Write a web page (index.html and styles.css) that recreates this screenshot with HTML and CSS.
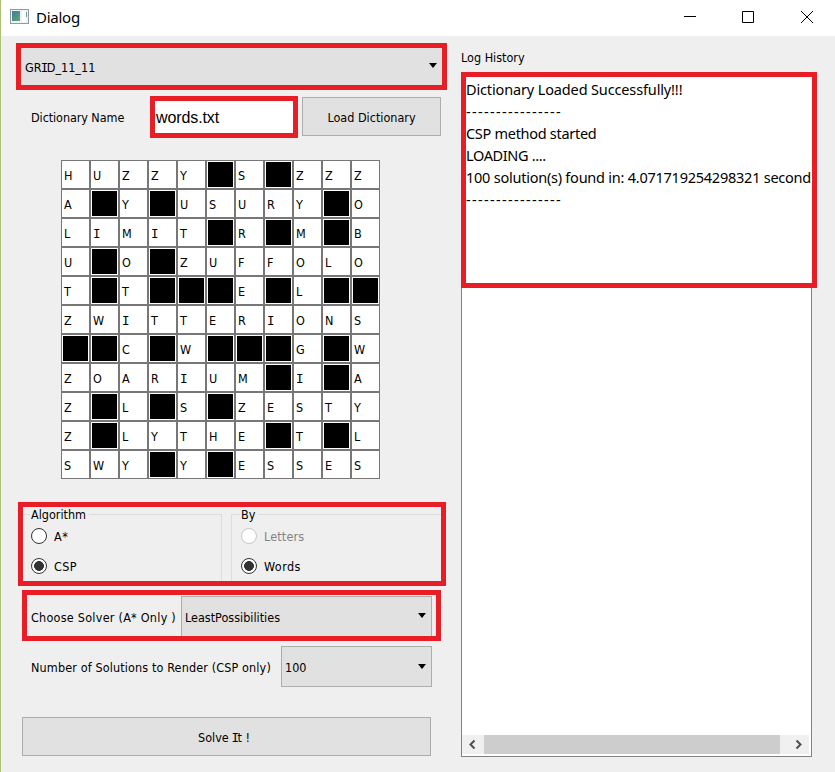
FILE: index.html
```html
<!DOCTYPE html>
<html lang="en">
<head>
<meta charset="utf-8">
<title>Dialog</title>
<link rel="stylesheet" href="styles.css">
</head>
<body>
<header class="titlebar">
  <svg class="app-icon" width="20" height="16" viewBox="0 0 20 16">
    <defs><linearGradient id="g" x1="0" y1="0" x2="1" y2="1"><stop offset="0" stop-color="#3f7d9c"/><stop offset="1" stop-color="#62a578"/></linearGradient></defs>
    <rect x=".5" y=".5" width="18" height="14" fill="#eef2f5" stroke="#8d9ba8"/>
    <rect x="2" y="2" width="8" height="10" fill="url(#g)"/>
    <rect x="12" y="2" width="4" height="11" fill="#fff"/>
    <rect x="16" y="3" width="1" height="5" fill="#6f9c96"/>
  </svg>
  <span class="title">Dialog</span>
  <svg class="controls" width="132" height="14" viewBox="0 0 132 14" fill="none" stroke="#000">
    <path d="M0 6.5h12M58.500 1.500h11v11h-11zM117 1l12 12M129 1l-12 12"/>
  </svg>
</header>
<main class="content">
  <section class="left">
    <div class="mark grid-choice"><div class="combo"><span class="t-grid">GR<b class="i">I</b>D_11_11</span><i class="arrow"></i></div></div>
    <div class="dict">
      <label class="t-dict">Dictionary Name</label>
      <div class="mark field"><span>words.txt</span></div>
      <button class="load"><span class="t-load">Load Dictionary</span></button>
    </div>
    <div class="board" id="board"></div>
    <div class="mark groups">
      <fieldset class="algo"><legend class="t-algo">Algorithm</legend>
        <div class="radio"><i class="dot"></i><span class="t-astar">A*</span></div>
        <div class="radio"><i class="dot on"></i><span class="t-csp">CSP</span></div>
      </fieldset>
      <fieldset class="by"><legend>By</legend>
        <div class="radio off"><i class="dot"></i><span class="t-letters">Letters</span></div>
        <div class="radio"><i class="dot on"></i><span class="t-words">Words</span></div>
      </fieldset>
    </div>
    <div class="mark solver">
      <label class="t-choose">Choose Solver (A* Only )</label>
      <div class="combo"><span class="t-least">LeastPossibilities</span><i class="arrow"></i></div>
    </div>
    <div class="count">
      <label class="t-number">Number of Solutions to Render (CSP only)</label>
      <div class="combo"><span class="t-hundred">100</span><i class="arrow"></i></div>
    </div>
    <button class="solve"><span class="t-solve">Solve <b class="i">I</b>t !</span></button>
  </section>
  <section class="right">
    <h2 class="log-title"><span class="t-log">Log History</span></h2>
    <div class="log">
      <div class="mark lines">
        <p><span class="l1">Dictionary Loaded Successfully!!!</span></p>
        <p><span class="dash">----------------</span></p>
        <p><span class="l3">CSP method started</span></p>
        <p><span class="l4">LOADING ....</span></p>
        <p><span class="l5">100 solution(s) found in: 4.071719254298321 second</span></p>
        <p><span class="dash">----------------</span></p>
      </div>
      <div class="scroll">
        <svg width="20" height="19" viewBox="0 0 20 19"><path d="M12.500 5.500l-4 4 4 4" fill="none" stroke="#505050" stroke-width="2"/></svg>
        <div class="thumb"></div>
        <svg width="20" height="19" viewBox="0 0 20 19"><path d="M7.500 5.500l4 4-4 4" fill="none" stroke="#505050" stroke-width="2"/></svg>
      </div>
    </div>
  </section>
</main>
<script src="board.js"></script>
</body>
</html>
```
FILE: styles.css
```css
* { box-sizing: border-box; }
body {
  margin: 0; width: 835px; height: 772px; overflow: hidden;
  display: flex; flex-direction: column;
  background: #efefef; color: #000; border-left: 1px solid #a9c573;
  font: 12.500px/16px "DejaVu Sans Condensed", "DejaVu Sans", sans-serif;
  font-stretch: condensed;
}
span, label, legend { white-space: nowrap; }
.i { font: 12.500px/1 "DejaVu Sans Mono", monospace; letter-spacing: -1.500px; margin-left: -.8px; }
.titlebar { height: 36px; background: #fff; display: flex; align-items: center; padding: 0 19px 2px 9px; flex: none; }
.title { font: 15px/20px "Noto Sans", sans-serif; margin-left: 6px; letter-spacing: -.25px; }
.controls { margin-left: auto; width: 132px; }
.content { flex: 1; display: flex; align-items: flex-start; }
.left { width: 445px; padding: 7px 0 0 15px; display: flex; flex-direction: column; align-items: flex-start; }
.mark { border: 5px solid #e81d25; }
.combo { background: #e1e1e1; border: 1px solid #adadad; display: flex; align-items: center; padding: 0 5px 0 3px; }
.arrow { width: 8px; height: 5px; background: #000; clip-path: polygon(0 0, 100% 0, 50% 100%); margin: -2px 0 0 auto; }
.grid-choice { width: 431px; height: 47px; }
.grid-choice .combo { height: 100%; border: 0; padding-left: 4px; padding-top: 3px; }
.grid-choice .arrow { margin-top: -5px; }
.dict { display: flex; margin-top: 6px; height: 42px; }
.dict label { width: 134px; padding: 14px 0 0 15px; letter-spacing: -.08px; }
.field { width: 148px; background: #fff; font: 16px/34px "Liberation Sans", sans-serif; padding-left: 1px; letter-spacing: -.1px; }
button { background: #e1e1e1; border: 1px solid #adadad; border-radius: 0; font: inherit; color: #000; padding: 1px 0 0; }
.load { width: 139px; height: 39px; margin: 1px 0 0 4px; padding-top: 3px; }
.board { margin: 22px 0 0 45px; display: grid; grid-template-columns: repeat(11, 29px); grid-auto-rows: 29px; }
.cell { border: 1px solid #777; background: #fff; padding: 7px 0 0 2px; line-height: 16px; }
.cell.block { padding: 1px; background: #000 content-box; box-shadow: inset 0 0 0 1px #fff; }
.cell .i { margin-left: 0; }
.groups { width: 428px; height: 84px; margin: 23px 0 0 2px; display: flex; overflow: hidden; }
fieldset { margin: 0; border: 1px solid #dcdcdc; border-bottom: 0; padding: 0 0 0 8px; height: 74px; min-width: 0; }
legend { padding: 0 3px 0 1px; margin-left: -1px; line-height: 15px; }
.algo { width: 199px; border-left: 0; }
.by { width: 210px; margin-left: 9px; border-right: 0; padding-left: 9px; }
.radio { display: flex; align-items: center; height: 16px; margin: 6px 0 14px; }
.radio span { padding-top: 1px; }
.t-astar { letter-spacing: .6px; }
.t-csp { letter-spacing: .4px; }
.t-words { letter-spacing: .45px; }
.t-letters { letter-spacing: .15px; }
.dot { width: 16px; height: 16px; border: 1px solid #333; border-radius: 50%; background: #fff; margin-right: 7px; }
.dot.on { background: radial-gradient(circle, #333 0 4.600px, #fff 5.200px); }
.off { color: #838383; }
.off .dot { border-color: #c8c8c8; }
.solver { width: 419px; height: 51px; margin: 4px 0 0 6px; display: flex; }
.solver label { width: 154px; padding: 15px 0 0 4px; letter-spacing: .25px; }
.solver .combo { width: 251px; height: 40px; margin-top: 1px; border-bottom: 0; padding-top: 2px; }
.solver .arrow { margin-top: -4px; }
.count { display: flex; margin: 5px 0 0 15px; }
.count label { width: 250px; padding-top: 14px; letter-spacing: .13px; }
.count .combo { width: 151px; height: 41px; padding-top: 2px; }
.solve { width: 409px; height: 39px; margin: 30px 0 0 6px; padding: 3px 5px 0 0; }
.right { width: 356px; margin-left: 15px; padding-top: 14px; }
.log-title { margin: 0; font: inherit; height: 22px; }
.log { width: 351px; height: 685px; background: #fff; border: 1px solid #828282; display: flex; flex-direction: column; }
.lines { position: relative; width: 356px; height: 216px; margin: -1px 0 0 -1px; padding-top: 1px; background: #fff; flex: none; }
p { margin: 0; font: 14.500px/22px "Noto Sans", sans-serif; height: 22px; }
.l1 { letter-spacing: -.14px; }
.l3 { letter-spacing: -.29px; }
.l4 { letter-spacing: -.35px; }
.l5 { letter-spacing: -.24px; }
.dash { letter-spacing: 1.330px; }
.scroll { margin: auto 2px 2px 0; height: 19px; background: #f0f0f0; display: flex; }
.thumb { width: 296px; margin-left: 2px; margin-right: 9px; background: #cdcdcd; }
```
FILE: board.js
```js
const rows = [
  "HUZZY#S#ZZZ",
  "A#Y#USURY#O",
  "LIMIT#R#M#B",
  "U#O#ZUFFOLO",
  "T#T###E#L##",
  "ZWITTERIONS",
  "##C#W###G#W",
  "ZOARIUM#I#A",
  "Z#L#S#ZESTY",
  "Z#LYTHE#T#L",
  "SWY#Y#ESSES"
];
const board = document.getElementById("board");
for (const row of rows) {
  for (const ch of row) {
    const cell = document.createElement("div");
    cell.className = ch === "#" ? "cell block" : "cell";
    if (ch !== "#") {
      const letter = document.createElement("span");
      if (ch === "I") letter.className = "i";
      letter.textContent = ch;
      cell.appendChild(letter);
    }
    board.appendChild(cell);
  }
}
```
